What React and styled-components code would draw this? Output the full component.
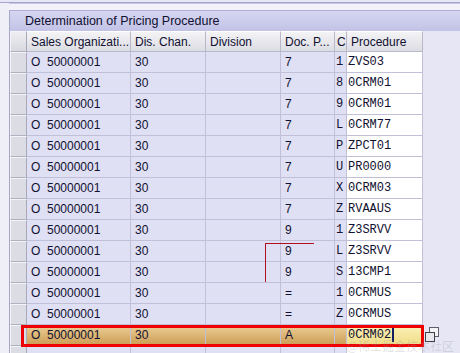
import React from "react";
import styled, { createGlobalStyle } from "styled-components";

const GlobalStyle = createGlobalStyle`
  html, body {
    margin: 0;
    padding: 0;
    background: #efeff8;
  }
  body {
    font-family: "Liberation Sans", Arial, sans-serif;
  }
`;

const rows = [
  { doc: "7", c: "1", proc: "ZVS03" },
  { doc: "7", c: "8", proc: "0CRM01" },
  { doc: "7", c: "9", proc: "0CRM01" },
  { doc: "7", c: "L", proc: "0CRM77" },
  { doc: "7", c: "P", proc: "ZPCT01" },
  { doc: "7", c: "U", proc: "PR0000" },
  { doc: "7", c: "X", proc: "0CRM03" },
  { doc: "7", c: "Z", proc: "RVAAUS" },
  { doc: "9", c: "1", proc: "Z3SRVV" },
  { doc: "9", c: "L", proc: "Z3SRVV" },
  { doc: "9", c: "S", proc: "13CMP1" },
  { doc: "=", c: "1", proc: "0CRMUS" },
  { doc: "=", c: "Z", proc: "0CRMUS" },
  { doc: "A", c: "", proc: "0CRM02", active: true },
  { doc: "", c: "", proc: "" },
];

const Page = styled.div`
  width: 460px;
  height: 353px;
  overflow: hidden;
  position: relative;
  background: #efeff8;
`;

const TopStrip = styled.div`
  height: 2px;
  border-bottom: 1px solid #a8a4d0;
  background: #e6e6f4;
`;

const TopGap = styled.div`
  height: 6px;
  margin-left: 9px;
  border-top: 1px solid #c8c6e4;
  background: #f2f2f8;
`;

const Frame = styled.div`
  margin-left: 9px;
  border-left: 1px solid #a8a6c8;
  background: #e6e6f5;
`;

const TitleBar = styled.div`
  height: 21px;
  box-sizing: border-box;
  padding-left: 15px;
  display: flex;
  align-items: center;
  font-size: 12.5px;
  color: #101030;
  background: linear-gradient(#d6d6f2, #c2c2e6);
  border-top: 1px solid #b0aed8;
`;

const Grid = styled.div`
  display: grid;
  grid-template-columns: 17px 104px 75px 75px 54px 12px 76px;
  grid-auto-rows: 21px;
`;

const HeadCell = styled.div`
  box-sizing: border-box;
  padding-left: ${(p) => (p.$narrow ? "2px" : "4px")};
  display: flex;
  align-items: center;
  font-size: 12px;
  color: #101030;
  white-space: nowrap;
  overflow: hidden;
  background: linear-gradient(#f4f4f6, #dcdce4);
  border-right: 1px solid #b8b8c8;
  border-bottom: 1px solid #b8b8c8;
  border-top: 1px solid #ffffff;
`;

const SelCell = styled.div`
  box-sizing: border-box;
  background: ${(p) => (p.$corner ? "linear-gradient(#eeeef2, #d8d8e0)" : "#dcdce4")};
  border-top: 1px solid #f4f4f8;
  border-left: 1px solid #f4f4f8;
  border-right: 1px solid #a8a8b8;
  border-bottom: 1px solid #b0b0c0;
`;

const Cell = styled.div`
  box-sizing: border-box;
  padding-left: ${(p) => (p.$mono ? "1px" : "4px")};
  display: flex;
  align-items: center;
  font-size: 12px;
  font-family: ${(p) =>
    p.$mono ? '"Liberation Mono", "Courier New", monospace' : '"Liberation Sans", Arial, sans-serif'};
  color: #101030;
  white-space: pre;
  background: ${(p) =>
    p.$active
      ? p.$white
        ? "linear-gradient(#fbf2b8, #f0dc88)"
        : "linear-gradient(#ecd098, #cc9c54)"
      : p.$white
      ? "#ffffff"
      : "#e0e0f4"};
  border-right: 1px solid #c2c0d8;
  border-bottom: 1px solid #c2c0d8;
`;

const Caret = styled.span`
  display: inline-block;
  width: 2px;
  height: 14px;
  margin-left: 1px;
  background: #102060;
`;

const ActiveFrame = styled.div`
  position: absolute;
  left: 21px;
  top: 325px;
  width: 403px;
  height: 22px;
  box-sizing: border-box;
  border: 3px solid #ee0000;
  pointer-events: none;
`;

const HelpButton = styled.div`
  position: absolute;
  left: 425px;
  top: 327px;
  width: 14px;
  height: 15px;
`;

const Annotation = styled.div`
  position: absolute;
  left: 265px;
  top: 243px;
  width: 48px;
  height: 38px;
  border-left: 1px solid #b01020;
  border-top: 1px solid #b01020;
  pointer-events: none;
`;

const Watermark = styled.div`
  position: absolute;
  right: 6px;
  bottom: 0;
  font-size: 12px;
  line-height: 15px;
  font-family: "Noto Sans CJK SC", sans-serif;
  color: rgba(150, 150, 160, 0.3);
  pointer-events: none;
`;

function HelpIcon() {
  return (
    <svg width="14" height="15" viewBox="0 0 14 15">
      <rect x="4.5" y="0.5" width="9" height="9" fill="#f4f4f6" stroke="#606068" />
      <rect x="0.5" y="5.5" width="9" height="9" fill="#e8e8ec" stroke="#404048" />
    </svg>
  );
}

export default function App() {
  return (
    <Page>
      <GlobalStyle />
      <TopStrip />
      <TopGap />
      <Frame>
        <TitleBar>Determination of Pricing Procedure</TitleBar>
        <Grid>
          <SelCell $corner />
          <HeadCell>Sales Organizati...</HeadCell>
          <HeadCell>Dis. Chan.</HeadCell>
          <HeadCell>Division</HeadCell>
          <HeadCell>Doc. P...</HeadCell>
          <HeadCell $narrow>C</HeadCell>
          <HeadCell>Procedure</HeadCell>
          {rows.map((r, i) => (
            <React.Fragment key={i}>
              <SelCell />
              <Cell $active={r.active}>{r.doc ? "O  50000001" : ""}</Cell>
              <Cell $active={r.active}>{r.doc ? "30" : ""}</Cell>
              <Cell $active={r.active} />
              <Cell $active={r.active}>{r.doc}</Cell>
              <Cell $active={r.active} $mono>
                {r.c}
              </Cell>
              <Cell $active={r.active} $white $mono>
                {r.proc}
                {r.active && <Caret />}
              </Cell>
            </React.Fragment>
          ))}
        </Grid>
      </Frame>
      <Annotation />
      <ActiveFrame />
      <HelpButton>
        <HelpIcon />
      </HelpButton>
      <Watermark>@稀土掘金技术社区</Watermark>
    </Page>
  );
}
